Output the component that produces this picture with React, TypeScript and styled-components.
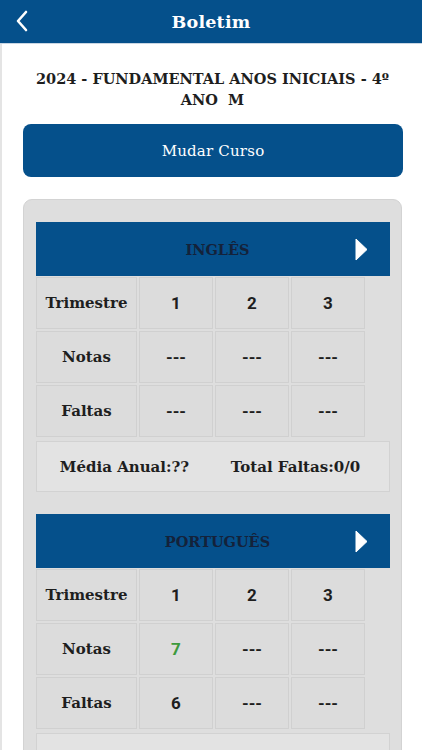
import React from 'react'
import styled, { createGlobalStyle } from 'styled-components'

const GlobalStyle = createGlobalStyle`
  html, body {
    margin: 0;
    padding: 0;
    background: #ffffff;
  }
  body {
    font-family: "DejaVu Serif", "Liberation Serif", serif;
    color: #222;
  }
`

const BLUE = '#05508b'

const Header = styled.header`
  display: grid;
  grid-template-columns: 44px 1fr 44px;
  align-items: center;
  height: 43px;
  background: ${BLUE};
  border-bottom: 1px solid #c9d6e3;
`

const BackButton = styled.button`
  display: flex;
  align-items: center;
  justify-content: center;
  height: 43px;
  border: 0;
  padding: 0 0 2px 0;
  background: transparent;
  cursor: pointer;
`

const HeaderTitle = styled.h1`
  margin: 0;
  text-align: center;
  color: #ffffff;
  font-size: 17.5px;
  font-weight: bold;
  letter-spacing: 0.2px;
`

const Page = styled.main`
  padding: 24px 20px 30px 21px;
  border-left: 2px solid #e4e4e4;
  min-height: 700px;
`

const CourseTitle = styled.h2`
  margin: 0;
  padding: 0 10px;
  text-align: center;
  font-size: 14.5px;
  line-height: 21px;
  font-weight: bold;
  color: #1e1e1e;
  white-space: pre-wrap;
`

const ChangeButton = styled.button`
  display: block;
  width: 380px;
  height: 53px;
  margin-top: 14px;
  border: 0;
  border-radius: 8px;
  background: ${BLUE};
  color: #ffffff;
  font-family: "DejaVu Serif", serif;
  font-size: 15px;
  letter-spacing: 0.2px;
  cursor: pointer;
`

const Panel = styled.section`
  margin-top: 22px;
  width: 379px;
  box-sizing: border-box;
  padding: 22px 11px 20px 12px;
  background: #dedede;
  border: 1px solid #d3d3d3;
  border-radius: 9px;
  display: flex;
  flex-direction: column;
  gap: 22px;
`

const Subject = styled.div`
  display: flex;
  flex-direction: column;
`

const SubjectBar = styled.div`
  display: grid;
  grid-template-columns: 1fr auto;
  align-items: center;
  height: 54px;
  padding: 0 22px 0 44px;
  background: ${BLUE};
`

const SubjectName = styled.span`
  text-align: center;
  font-size: 14.5px;
  font-weight: bold;
  color: #14223a;
`

const Grid = styled.div`
  display: grid;
  grid-template-columns: 101px 74px 74px 74px;
  grid-auto-rows: 52px;
  gap: 2px;
  margin-top: 1px;
`

const Cell = styled.div<{ $label?: boolean; $tone?: 'green' }>`
  display: flex;
  align-items: center;
  justify-content: center;
  border: 1px solid #d0d0d0;
  background: #dcdcdc;
  font-family: ${({ $label }) => ($label ? '"DejaVu Serif", serif' : 'Roboto, "Noto Sans", sans-serif')};
  font-size: ${({ $label }) => ($label ? '15px' : '17px')};
  font-weight: bold;
  color: ${({ $tone }) => ($tone === 'green' ? '#3d9a3d' : '#1e1e1e')};
`

const Summary = styled.div`
  display: flex;
  justify-content: space-around;
  align-items: center;
  height: 49px;
  margin-top: 4px;
  padding: 0 8px 0 2px;
  background: #e3e3e3;
  border: 1px solid #d2d2d2;
  font-size: 15px;
  font-weight: bold;
  color: #1e1e1e;
`

interface SubjectData {
  name: string
  notas: string[]
  faltas: string[]
  media: string
  total: string
}

const subjects: SubjectData[] = [
  { name: 'INGLÊS', notas: ['---', '---', '---'], faltas: ['---', '---', '---'], media: '??', total: '0/0' },
  { name: 'PORTUGUÊS', notas: ['7', '---', '---'], faltas: ['6', '---', '---'], media: '??', total: '6/0' },
]

const Chevron = () => (
  <svg width="14" height="22" viewBox="0 0 14 22">
    <path d="M11 2 L3 11 L11 20" fill="none" stroke="#fff" strokeWidth="2.6" strokeLinecap="round" strokeLinejoin="round" />
  </svg>
)

const Triangle = () => (
  <svg width="13" height="23" viewBox="0 0 13 23">
    <path d="M1 1 L12 11.5 L1 22 Z" fill="#fff" stroke="#fff" strokeWidth="1" strokeLinejoin="round" />
  </svg>
)

const SubjectCard: React.FC<{ data: SubjectData }> = ({ data }) => (
  <Subject>
    <SubjectBar>
      <SubjectName>{data.name}</SubjectName>
      <Triangle />
    </SubjectBar>
    <Grid>
      <Cell $label>Trimestre</Cell>
      {['1', '2', '3'].map((t) => (
        <Cell key={t}>{t}</Cell>
      ))}
      <Cell $label>Notas</Cell>
      {data.notas.map((n, i) => (
        <Cell key={i} $tone={n !== '---' && Number(n) >= 6 ? 'green' : undefined}>{n}</Cell>
      ))}
      <Cell $label>Faltas</Cell>
      {data.faltas.map((f, i) => (
        <Cell key={i}>{f}</Cell>
      ))}
    </Grid>
    <Summary>
      <span>Média Anual:{data.media}</span>
      <span>Total Faltas:{data.total}</span>
    </Summary>
  </Subject>
)

export default function App() {
  return (
    <>
      <GlobalStyle />
      <Header>
        <BackButton aria-label="voltar">
          <Chevron />
        </BackButton>
        <HeaderTitle>Boletim</HeaderTitle>
        <span />
      </Header>
      <Page>
        <CourseTitle>{'2024 - FUNDAMENTAL ANOS INICIAIS - 4º\nANO  M'}</CourseTitle>
        <ChangeButton>Mudar Curso</ChangeButton>
        <Panel>
          {subjects.map((s) => (
            <SubjectCard key={s.name} data={s} />
          ))}
        </Panel>
      </Page>
    </>
  )
}
